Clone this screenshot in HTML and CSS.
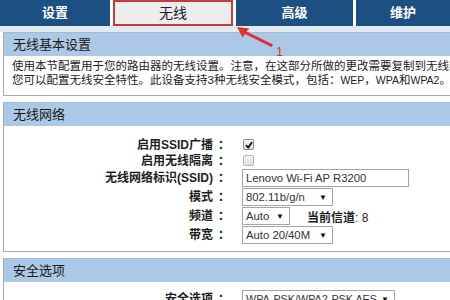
FILE: index.html
```html
<!DOCTYPE html>
<html lang="zh-CN">
<head>
    <meta charset="UTF-8">
    <meta name="viewport" content="width=device-width, initial-scale=1.0">
    <title>无线设置</title>
    <link rel="stylesheet" href="styles.css">
</head>
<body>

    <div class="tabs">
        <div class="tab">设置</div>
        <div class="tab active">无线</div>
        <div class="tab">高级</div>
        <div class="tab">维护</div>
    </div>
    <div class="strip"></div>

    <div class="section">
        <div class="section-title">无线基本设置</div>
        <div class="section-body intro">
            使用本节配置用于您的路由器的无线设置。注意，在这部分所做的更改需要复制到无线客户端。<br>
            您可以配置无线安全特性。此设备支持3种无线安全模式，包括：<span class="latin">WEP</span>，<span class="latin">WPA</span>和<span class="latin">WPA2</span>。
        </div>
    </div>

    <div class="section">
        <div class="section-title">无线网络</div>
        <div class="section-body form">
            <label>启用SSID广播<span class="colon">：</span></label>
            <div><span class="check on"><svg width="8" height="8" viewBox="0 0 8 8"><path d="M1 4.2 L3.2 6.5 L7 1.2" fill="none" stroke="#111" stroke-width="1.8"/></svg></span></div>

            <label>启用无线隔离<span class="colon">：</span></label>
            <div><span class="check"></span></div>

            <label>无线网络标识(SSID)<span class="colon">：</span></label>
            <div><span class="text-input">Lenovo Wi-Fi AP R3200</span></div>

            <label>模式<span class="colon">：</span></label>
            <div><span class="select w91">802.11b/g/n<i>▼</i></span></div>

            <label>频道<span class="colon">：</span></label>
            <div class="inline">
                <span class="select w48">Auto<i>▼</i></span>
                <span class="channel"><b>当前信道</b>: 8</span>
            </div>

            <label>带宽<span class="colon">：</span></label>
            <div><span class="select w91">Auto 20/40M<i>▼</i></span></div>
        </div>
    </div>

    <div class="section">
        <div class="section-title">安全选项</div>
        <div class="section-body form">
            <label>安全选项<span class="colon">：</span></label>
            <div><span class="select w153">WPA-PSK/WPA2-PSK AES<i>▼</i></span></div>
        </div>
    </div>

    <svg class="marker" width="60" height="34" viewBox="0 0 60 34">
        <path d="M3 2 L15.5 3.5 L12.5 6.5 L39 19.5 L37.5 22 L11 9 L8.5 12.5 Z" fill="#e2312c"/>
        <text x="42" y="31" fill="#e2312c" font-family="Liberation Sans, sans-serif" font-size="13">1</text>
    </svg>

</body>
</html>
```

FILE: styles.css
```css
html {
    overflow: hidden;
}

body {
    margin: 0;
    background: #fff;
    color: #1e1e1e;
    font-family: "Liberation Sans", "Noto Sans CJK SC", sans-serif;
    font-size: 12px;
    position: relative;
}

.tabs {
    display: flex;
    gap: 3px;
    height: 26px;
}

.tab {
    background: #1c4f82;
    color: #fff;
    font-weight: bold;
    font-size: 13px;
    line-height: 26px;
    text-align: center;
}

.tab:nth-child(1) { width: 110px; }
.tab:nth-child(2) { width: 120px; }
.tab:nth-child(3) { width: 117px; }
.tab:nth-child(4) { flex: 1; }

.tab.active {
    background: #ededed;
    color: #222;
    font-weight: normal;
    font-size: 14px;
    border: 2px solid #c33b3b;
    line-height: 22px;
    box-sizing: border-box;
}

.strip {
    height: 6px;
    background: #e2eaf2;
}

.section {
    margin: 0 -8px 6px 3px;
    border: 1px solid #a9a9a9;
    border-top: none;
    overflow: hidden;
}

.section-title {
    background: #abc8e6;
    border-top: 1px solid #9dbbd9;
    height: 23px;
    line-height: 23px;
    padding-left: 9px;
    font-size: 13px;
    color: #1a1a1a;
}

.section:first-of-type .section-title {
    height: 24px;
    line-height: 24px;
    border-top: none;
}

.section-body {
    background: #fff;
}

.intro {
    padding: 3px 0 8px 8px;
    line-height: 14px;
    font-size: 11.5px;
    white-space: nowrap;
    color: #222;
}

.intro .latin {
    font-size: 10.5px;
}

.form {
    display: grid;
    grid-template-columns: 226px 1fr;
    column-gap: 12px;
    row-gap: 1px;
    align-items: center;
    padding: 11px 0 7px;
}

.section:last-of-type .form {
    padding-top: 8px;
}

.form label {
    text-align: right;
    font-weight: bold;
    line-height: 14px;
    white-space: nowrap;
}

.colon {
    margin-left: 5px;
}

.form > div {
    display: flex;
    align-items: center;
}

.inline {
    gap: 17px;
}

.check {
    display: flex;
    align-items: center;
    justify-content: center;
    width: 9px;
    height: 9px;
    margin: 2px 0 2px 1px;
    border: 1px solid #b5b5b5;
    border-radius: 2px;
    background: linear-gradient(#f4f4f4, #dedede);
}

.check.on {
    border-color: #8d8d8d;
}

.text-input,
.select {
    display: flex;
    align-items: center;
    box-sizing: border-box;
    height: 18px;
    border: 1px solid #a3a3a3;
    padding: 0 3px;
    font-size: 11.3px;
    color: #333;
    white-space: nowrap;
    background: #fff;
}

.text-input {
    width: 167px;
}

.select {
    justify-content: space-between;
}

.select i {
    font-style: normal;
    font-size: 8px;
    color: #111;
    padding-right: 2px;
}

.w48 { width: 48px; }
.w91 { width: 91px; }

.w153 {
    width: 153px;
    font-size: 10.8px;
}

.channel {
    font-size: 12px;
}

.marker {
    position: absolute;
    left: 234px;
    top: 25px;
}
```
